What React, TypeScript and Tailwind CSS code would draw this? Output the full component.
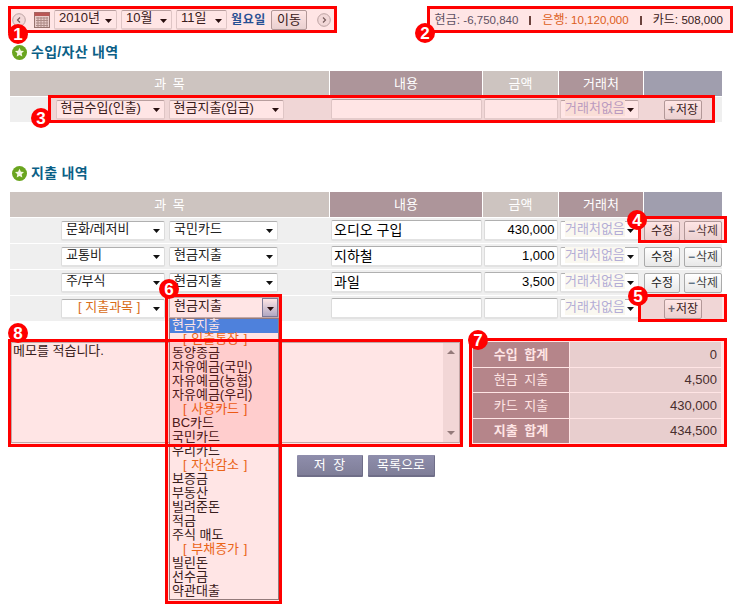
const options: [string, boolean?, boolean?][] = [
  ["현금지출", false, true],
  ["[ 인출통장 ]", true],
  ["동양종금"],
  ["자유예금(국민)"],
  ["자유예금(농협)"],
  ["자유예금(우리)"],
  ["[ 사용카드 ]", true],
  ["BC카드"],
  ["국민카드"],
  ["우리카드"],
  ["[ 자산감소 ]", true],
  ["보증금"],
  ["부동산"],
  ["빌려준돈"],
  ["적금"],
  ["주식 매도"],
  ["[ 부채증가 ]", true],
  ["빌린돈"],
  ["선수금"],
  ["약관대출"],
];

function Arrow() {
  return (
    <svg width="7" height="4" viewBox="0 0 7 4" className="mt-[2px] shrink-0">
      <path d="M0 0h7L3.5 4z" fill="#111" />
    </svg>
  );
}

function Sel({ label, className, textClass }: any) {
  return (
    <div className={`flex h-[20px] items-center justify-between rounded-[2px] border border-[#dcdcdc] border-t-[#b0b0b0] border-b-2 border-b-[#e2e2e2] bg-white pl-[4px] pr-[4px] text-[13px] leading-[16px] text-[#222] ${className}`}>
      <span className={`mb-[3px] whitespace-nowrap ${textClass || ""}`}>{label}</span>
      <Arrow />
    </div>
  );
}

function Field({ value, className }: any) {
  return (
    <input
      readOnly
      defaultValue={value}
      className={`h-[21px] rounded-[2px] border border-[#dcdcdc] border-t-[#b0b0b0] border-b-2 border-b-[#e2e2e2] bg-white px-[2px] pb-[2px] leading-[16px] text-black outline-none ${className}`}
    />
  );
}

function Btn({ children, className }: any) {
  return (
    <button className={`flex h-[20px] items-center justify-center rounded-[2px] border border-[#aaa] bg-gradient-to-b from-white to-[#e8e8e8] text-[12px] leading-[14px] text-[#222] ${className}`}>
      {children}
    </button>
  );
}

function Sign({ c }: { c: string }) {
  return <span className="mr-[1px] font-bold text-[#5c6f80]">{c}</span>;
}

function Header() {
  return (
    <div className="grid grid-cols-[319px_152px_75px_84px_78px] gap-x-px text-[13px] text-white">
      <div className="flex h-[25px] items-center justify-center bg-[#cdc4c0] [word-spacing:3px]">과 목</div>
      <div className="flex h-[25px] items-center justify-center bg-[#ad959a]">내용</div>
      <div className="flex h-[25px] items-center justify-center bg-[#cdc4c0]">금액</div>
      <div className="flex h-[25px] items-center justify-center bg-[#ad959a]">거래처</div>
      <div className="h-[25px] bg-[#a09eae]"></div>
    </div>
  );
}

function Row({ a, b, text, amount, orange, w1, w2, add }: any) {
  return (
    <div className="mt-px grid h-[25px] grid-cols-[319px_152px_75px_84px_78px] gap-x-px bg-[#efefef]">
      <div className="flex items-center justify-center gap-[4px]">
        <Sel label={a} className={w1} textClass={orange ? "ml-[12px] text-[#d96d18]" : ""} />
        <Sel label={b} className={w2} />
      </div>
      <div className="flex items-center bg-[#efefef] px-px">
        <Field value={text} className="w-[151px] text-[14px]" />
      </div>
      <div className="flex items-center justify-center">
        <Field value={amount} className="w-[74px] text-right text-[13px]" />
      </div>
      <div className="flex items-center pl-px">
        <Sel label="거래처없음" className="w-[79px]" textClass="bg-[#faf8f0] text-[#b3add6]" />
      </div>
      <div className="flex items-center justify-center gap-[4px]">
        {add ? (
          <Btn className="w-[38px]">
            <Sign c="+" />저장
          </Btn>
        ) : (
          <>
            <Btn className="w-[36px]">수정</Btn>
            <Btn className="w-[38px] text-[#444]">
              <Sign c="−" />삭제
            </Btn>
          </>
        )}
      </div>
    </div>
  );
}

function Title({ children, className }: any) {
  return (
    <div className={`flex items-center gap-[4px] pl-[12px] text-[14px] font-bold leading-[16px] tracking-[0.3px] text-[#0b5f86] ${className}`}>
      <svg width="15" height="15" viewBox="0 0 15 15">
        <circle cx="7.5" cy="7.5" r="7.5" fill="#6aa51f" />
        <path d="M7.5 2.8l1.4 2.9 3.1.4-2.3 2.2.6 3.1-2.8-1.5-2.8 1.5.6-3.1L3 6.1l3.1-.4z" fill="#f4f7e4" />
      </svg>
      {children}
    </div>
  );
}

function Round({ dir }: { dir: string }) {
  return (
    <svg width="14" height="14" viewBox="0 0 14 14" className="shrink-0">
      <circle cx="7" cy="7" r="6.3" fill="#f1f1f1" stroke="#b5b5b5" />
      <path d={dir === "l" ? "M8 4.5L5.5 7 8 9.5" : "M6 4.5L8.5 7 6 9.5"} fill="none" stroke="#666" strokeWidth="1.2" />
    </svg>
  );
}

function Box({ className }: any) {
  return <div className={`pointer-events-none absolute border-[3px] border-[#f00] bg-[rgba(255,0,0,0.1)] ${className}`}></div>;
}

function Badge({ n, className }: any) {
  return (
    <div className={`absolute flex h-[20px] w-[20px] items-center justify-center rounded-full bg-[#f00] text-[17px] font-bold leading-none text-white ${className}`}>
      {n}
    </div>
  );
}

function Sum({ label, value, bold }: any) {
  return (
    <div className="grid h-[25px] grid-cols-[96px_151px] gap-x-px">
      <div className={`flex items-center justify-center bg-[#ad959a] text-[13px] text-white [word-spacing:3px] ${bold ? "font-bold" : ""}`}>{label}</div>
      <div className="flex items-center justify-end bg-[#e6e6e6] pr-[4px] text-[13px] text-[#333]">{value}</div>
    </div>
  );
}

export default function App() {
  return (
    <div className="relative h-[608px] w-[740px] overflow-hidden bg-white font-['Liberation_Sans','Noto_Sans_CJK_KR',sans-serif]">
      {/* 상단 날짜 / 잔액 */}
      <div className="flex h-[40px] items-start justify-between pl-[12px] pr-[17px] pt-[10px]">
        <div className="flex h-[20px] items-center">
          <Round dir="l" />
          <svg width="16" height="16" viewBox="0 0 16 16" className="ml-[8px] shrink-0">
            <rect x="0.5" y="0.5" width="15" height="15" fill="#e8e4e2" stroke="#8b7f7b" />
            <rect x="0.5" y="0.5" width="15" height="3.5" fill="#b2605f" />
            <path d="M2 6h12M2 8.5h12M2 11h12M2 13.5h12M4 5v10M7 5v10M10 5v10M13 5v10" stroke="#a39a96" strokeWidth="1" fill="none" />
          </svg>
          <Sel label="2010년" className="ml-[4px] w-[63px] text-[12px]" />
          <Sel label="10월" className="ml-[4px] w-[51px] text-[12px]" />
          <Sel label="11일" className="ml-[4px] w-[51px] text-[12px]" />
          <span className="ml-[4px] w-[36px] whitespace-nowrap text-[12px] font-bold tracking-[0.6px] text-[#0f5aa5]">월요일</span>
          <Btn className="ml-[4px] w-[36px] text-[13px]">이동</Btn>
          <span className="ml-[10px]">
            <Round dir="r" />
          </span>
        </div>
        <div className="flex h-[20px] items-center whitespace-nowrap text-[12px] leading-none">
          <span className="text-[#4c5a6e]">현금: <span className="text-[11.5px]">-6,750,840</span></span>
          <span className="mx-[11px] h-[9px] w-[2px] bg-[#5a4a45]"></span>
          <span className="text-[#d9691c]">은행: <span className="text-[11.5px]">10,120,000</span></span>
          <span className="mx-[11px] h-[9px] w-[2px] bg-[#5a4a45]"></span>
          <span className="text-[#222]">카드: <span className="text-[11.5px]">508,000</span></span>
        </div>
      </div>

      <Title className="mt-[4px]">수입/자산 내역</Title>
      <div className="ml-[10px] mt-[11px] w-[712px]">
        <Header />
        <Row a="현금수입(인출)" b="현금지출(입금)" w1="w-[109px]" w2="w-[115px]" add />
      </div>

      <Title className="mt-[43px]">지출 내역</Title>
      <div className="ml-[10px] mt-[11px] w-[712px]">
        <Header />
        <Row a="문화/레저비" b="국민카드" text="오디오 구입" amount="430,000" w1="w-[104px]" w2="w-[109px]" />
        <Row a="교통비" b="현금지출" text="지하철" amount="1,000" w1="w-[104px]" w2="w-[109px]" />
        <Row a="주/부식" b="현금지출" text="과일" amount="3,500" w1="w-[104px]" w2="w-[109px]" />
        <Row a="[ 지출과목 ]" b="현금지출" orange w1="w-[104px]" w2="w-[109px]" add />
      </div>

      {/* 메모 / 합계 */}
      <div className="ml-[11px] mt-[21px] flex">
        <div className="flex h-[101px] w-[449px] border border-[#bbb] bg-white">
          <div className="flex-1 pl-[1px] text-[13px] leading-[16px] text-[#222]">메모를 적습니다.</div>
          <div className="flex w-[16px] flex-col items-center justify-between bg-[#f1efef] py-[7px]">
            <svg width="8" height="4" viewBox="0 0 8 4"><path d="M0 4h8L4 0z" fill="#888" /></svg>
            <svg width="8" height="4" viewBox="0 0 8 4"><path d="M0 0h8L4 4z" fill="#888" /></svg>
          </div>
        </div>
        <div className="ml-[13px] flex h-[101px] flex-col gap-y-px">
          <Sum label="수입 합계" value="0" bold />
          <Sum label="현금 지출" value="4,500" />
          <Sum label="카드 지출" value="430,000" />
          <Sum label="지출 합계" value="434,500" bold />
        </div>
      </div>

      <div className="ml-[297px] mt-[12px] flex gap-[5px]">
        <button className="h-[22px] w-[66px] rounded-[1px] border-b-2 border-r border-[#6f6e88] bg-gradient-to-b from-[#8f8eac] to-[#7f7e98] text-[13px] text-white [word-spacing:4px]">저 장</button>
        <button className="h-[22px] w-[67px] rounded-[1px] border-b-2 border-r border-[#6f6e88] bg-gradient-to-b from-[#8f8eac] to-[#7f7e98] text-[13px] text-white">목록으로</button>
      </div>

      {/* 펼쳐진 셀렉트 */}
      <div className="absolute left-[169px] top-[297px] w-[110px]">
        <div className="flex h-[21px] items-center justify-between border border-[#bbb] bg-white pl-[4px] text-[13px] text-[#222]">
          <span className="mb-[3px]">현금지출</span>
          <span className="flex h-full w-[16px] items-center justify-center border border-[#6d86a8] bg-gradient-to-b from-white to-[#a9bcd8]">
            <Arrow />
          </span>
        </div>
        <div className="border border-[#888] bg-white text-[13px] leading-[12px] text-[#222]">
          {options.map(([t, head, sel]) => (
            <div key={t} className={`h-[14px] whitespace-nowrap pl-[2px] ${head ? "pl-[13px] text-[#e8701a] [word-spacing:1px]" : ""} ${sel ? "bg-[#3a90f5] text-white" : ""}`}>
              {t}
            </div>
          ))}
        </div>
      </div>

      {/* 설명용 표시 */}
      <Box className="left-[8px] top-[6px] h-[27px] w-[329px]" />
      <Box className="left-[427px] top-[6px] h-[27px] w-[306px]" />
      <Box className="left-[48px] top-[95px] h-[28px] w-[667px]" />
      <Box className="left-[638px] top-[216px] h-[27px] w-[89px]" />
      <Box className="left-[638px] top-[294px] h-[28px] w-[89px]" />
      <Box className="left-[165px] top-[294px] h-[310px] w-[117px]" />
      <Box className="left-[469px] top-[338px] h-[109px] w-[258px]" />
      <Box className="left-[8px] top-[339px] h-[108px] w-[455px]" />
      <Badge n="1" className="left-[8px] top-[24px]" />
      <Badge n="2" className="left-[415px] top-[23px]" />
      <Badge n="3" className="left-[31px] top-[108px]" />
      <Badge n="4" className="left-[627px] top-[210px]" />
      <Badge n="5" className="left-[628px] top-[286px]" />
      <Badge n="6" className="left-[159px] top-[279px]" />
      <Badge n="7" className="left-[468px] top-[330px]" />
      <Badge n="8" className="left-[8px] top-[323px]" />
    </div>
  );
}
